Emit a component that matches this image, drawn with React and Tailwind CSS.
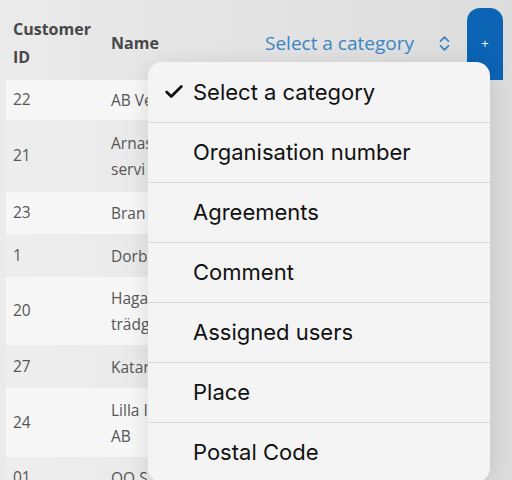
import { Check, ChevronsUpDown } from 'lucide-react';

const rows = [
  { id: '22', name: ['AB Ve'], h: 'h-[40px]' },
  { id: '21', name: ['Arnas', 'servi'], h: 'h-[72px]' },
  { id: '23', name: ['Bran'], h: 'h-[42px]' },
  { id: '1', name: ['Dorb'], h: 'h-[43px]' },
  { id: '20', name: ['Haga', 'trädg'], h: 'h-[68px]' },
  { id: '27', name: ['Katar'], h: 'h-[43px]' },
  { id: '24', name: ['Lilla I', 'AB'], h: 'h-[69px]' },
  { id: '01', name: ['OO S'], h: 'h-[42px]' },
];

const options = [
  'Select a category',
  'Organisation number',
  'Agreements',
  'Comment',
  'Assigned users',
  'Place',
  'Postal Code',
];

const App = () => {
  return (
    <div
      className="relative w-[512px] h-[480px] overflow-hidden bg-gradient-to-r from-[#ebebeb] to-[#dcdcdc]"
      style={{ fontFamily: '"Open Sans", sans-serif' }}
    >
      {/* Header */}
      <div className="flex items-center h-[80px] pl-[13px]">
        <div className="w-[98px] pt-[6px] text-[16px] font-bold leading-[28px] text-[#474747]">
          Customer
          <br />
          ID
        </div>
        <div className="w-[154px] pt-[6px] text-[16px] font-bold text-[#474747]">Name</div>
        <div className="flex items-center pt-[6px] text-[19px] text-[#3a86c4]">
          Select a category
          <ChevronsUpDown size={19} strokeWidth={2.3} className="ml-[21px] text-[#3a86c4]" />
        </div>
        <div className="ml-auto mr-[9px] self-end w-[36px] h-[72px] rounded-t-[13px] bg-[#0b64b4] flex items-center justify-center text-white text-[13px]">
          +
        </div>
      </div>

      {/* Table rows */}
      <div className="ml-[6px] w-[478px]">
        {rows.map((r, i) => (
          <div
            key={r.id}
            className={`flex items-center ${r.h} text-[15.5px] text-[#565656] ${
              i % 2 === 0 ? 'bg-[#f7f7f7]' : 'bg-gradient-to-r from-[#eeeeee] to-[#e0e0e0]'
            }`}
          >
            <div className="w-[105px] pl-[7px]">{r.id}</div>
            <div className="leading-[26px]">
              {r.name.map((n) => (
                <div key={n}>{n}</div>
              ))}
            </div>
          </div>
        ))}
      </div>

      {/* Dropdown menu */}
      <div
        className="absolute left-[148px] top-[62px] w-[342px] rounded-[14px] bg-[#f4f4f4] shadow-[0_4px_24px_rgba(0,0,0,0.12)] overflow-hidden"
        style={{ fontFamily: 'Inter, "Noto Sans", sans-serif' }}
      >
        {options.map((o, i) => (
          <div
            key={o}
            className={`relative flex items-center h-[60px] pl-[45px] text-[22px] text-[#111111] ${
              i > 0 ? 'border-t border-[#d9d9d9]' : ''
            }`}
          >
            {i === 0 && (
              <Check size={22} strokeWidth={3} className="absolute left-[15px] text-[#111111]" />
            )}
            {o}
          </div>
        ))}
      </div>
    </div>
  );
};

export default App;
